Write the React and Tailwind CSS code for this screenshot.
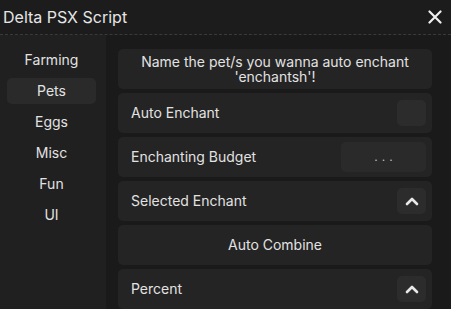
import React from "react";

const tabs = ["Farming", "Pets", "Eggs", "Misc", "Fun", "UI"];

function Chevron() {
  return (
    <div className="w-[29px] h-[26px] rounded-[5px] bg-[#2c2c2c] flex items-center justify-center">
      <svg width="14" height="9" viewBox="0 0 14 9" fill="none">
        <path d="M2 7 L7 2 L12 7" stroke="#e8e8e8" strokeWidth="2.6" strokeLinecap="round" strokeLinejoin="round" />
      </svg>
    </div>
  );
}

function Card({ children, center }) {
  return (
    <div
      className={`h-[40px] rounded-[5px] bg-[#242424] flex items-center ${
        center ? "justify-center" : "justify-between pl-[13px] pr-[6px]"
      }`}
    >
      {children}
    </div>
  );
}

export default function App() {
  return (
    <div
      className="w-[451px] h-[309px] flex flex-col bg-[#1c1c1c] text-[#e2e2e2] overflow-hidden"
      style={{ fontFamily: "Inter, 'Noto Sans', sans-serif" }}
    >
      {/* Title bar */}
      <div className="h-[35px] shrink-0 flex items-center justify-between pl-[3px] pr-[9px] border-b border-dashed border-[#3a3a3a]">
        <span className="text-[16px] leading-[20px] text-[#e6e6e6] -mt-[1px]">Delta PSX Script</span>
        <svg width="14" height="14" viewBox="0 0 14 14">
          <path d="M1.5 1.5 L12.5 12.5 M12.5 1.5 L1.5 12.5" stroke="#efefef" strokeWidth="2.2" strokeLinecap="round" />
        </svg>
      </div>

      <div className="flex flex-1 min-h-0">
        {/* Sidebar */}
        <div className="w-[106px] shrink-0 bg-[#202020] flex flex-col gap-[5px] pt-[12px] px-[7px]">
          {tabs.map((t) => (
            <div
              key={t}
              className={`h-[26px] w-[89px] rounded-[5px] flex items-center justify-center text-[14px] leading-[18px] ${
                t === "Pets" ? "bg-[#2a2a2a]" : ""
              }`}
            >
              {t}
            </div>
          ))}
        </div>

        {/* Content */}
        <div className="flex-1 bg-[#1a1a1a] pl-[12px] pt-[14px] pr-[19px] flex flex-col gap-[4px]">
          <div className="h-[40px] rounded-[5px] bg-[#242424] flex flex-col items-center justify-center text-[14px] leading-[15px] text-center pb-[1px]">
            <div className="h-[15px]">Name the pet/s you wanna auto enchant</div>
            <div className="h-[15px]">'enchantsh'!</div>
          </div>

          <Card>
            <span className="text-[14px] leading-[18px] -mt-[1px]">Auto Enchant</span>
            <div className="w-[29px] h-[26px] rounded-[5px] bg-[#2c2c2c]" />
          </Card>

          <Card>
            <span className="text-[14px] leading-[18px] -mt-[1px]">Enchanting Budget</span>
            <div className="w-[85px] h-[30px] rounded-[5px] bg-[#2a2a2a] flex items-center justify-center text-[12px] text-[#bdbdbd] tracking-[4px] pl-[4px]">
              ...
            </div>
          </Card>

          <Card>
            <span className="text-[14px] leading-[18px] -mt-[1px]">Selected Enchant</span>
            <Chevron />
          </Card>

          <Card center>
            <span className="text-[14px] leading-[18px] -mt-[1px]">Auto Combine</span>
          </Card>

          <Card>
            <span className="text-[14px] leading-[18px] -mt-[1px]">Percent</span>
            <Chevron />
          </Card>
        </div>
      </div>
    </div>
  );
}
